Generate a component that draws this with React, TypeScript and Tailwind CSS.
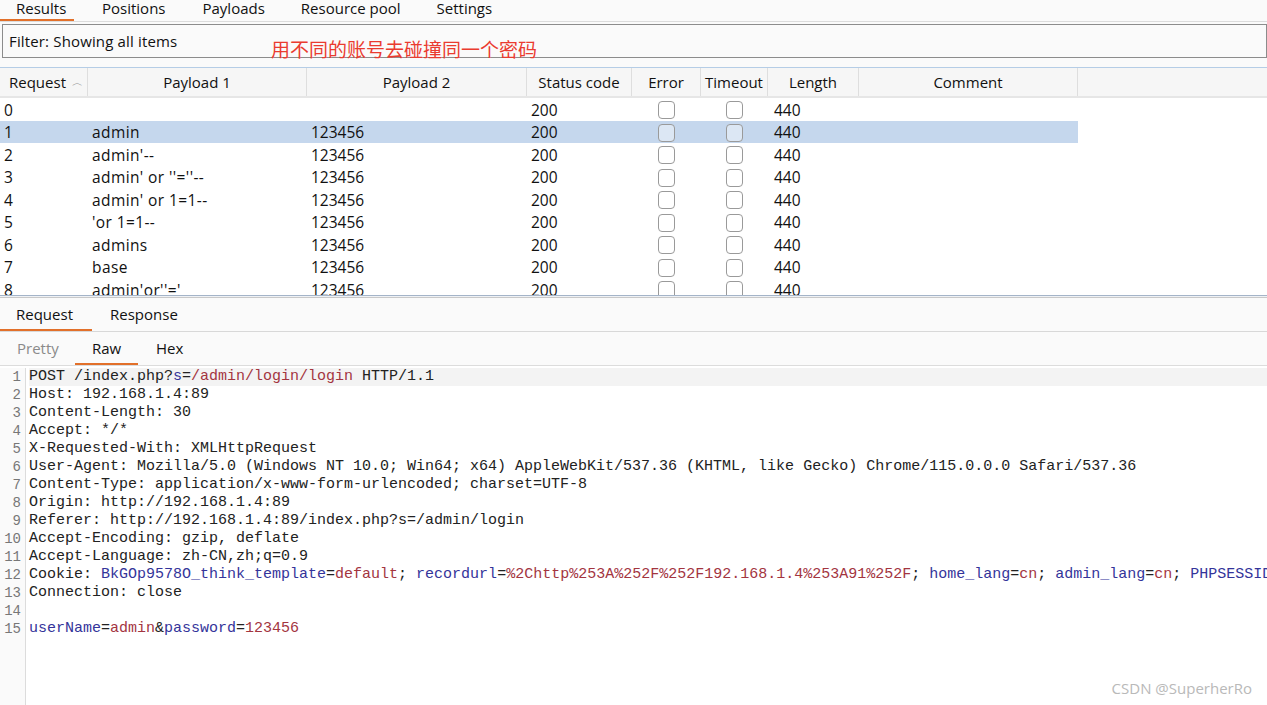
import React from 'react'

const sans = { fontFamily: '"Open Sans", "Noto Sans", sans-serif' }
const cols = [
  { name: 'Request', w: 'w-[88px]', align: 'justify-start pl-[9px]' },
  { name: 'Payload 1', w: 'w-[219px]', align: 'justify-center' },
  { name: 'Payload 2', w: 'w-[220px]', align: 'justify-center' },
  { name: 'Status code', w: 'w-[105px]', align: 'justify-center' },
  { name: 'Error', w: 'w-[69px]', align: 'justify-center' },
  { name: 'Timeout', w: 'w-[67px]', align: 'justify-center' },
  { name: 'Length', w: 'w-[91px]', align: 'justify-center' },
  { name: 'Comment', w: 'w-[219px]', align: 'justify-center' },
]

const rows: [string, string, string][] = [
  ['0', '', ''],
  ['1', 'admin', '123456'],
  ['2', "admin'--", '123456'],
  ['3', "admin' or ''=''--", '123456'],
  ['4', "admin' or 1=1--", '123456'],
  ['5', "'or 1=1--", '123456'],
  ['6', 'admins', '123456'],
  ['7', 'base', '123456'],
  ['8', "admin'or''='", '123456'],
]

type Seg = [string, 'k' | 'b' | 'r']
const B = 'text-[#34349a]'
const R = 'text-[#a3353f]'
const K = 'text-[#222]'

const code: Seg[][] = [
  [['POST /index.php?', 'k'], ['s', 'b'], ['=', 'k'], ['/admin/login/login', 'r'], [' HTTP/1.1', 'k']],
  [['Host: 192.168.1.4:89', 'k']],
  [['Content-Length: 30', 'k']],
  [['Accept: */*', 'k']],
  [['X-Requested-With: XMLHttpRequest', 'k']],
  [['User-Agent: Mozilla/5.0 (Windows NT 10.0; Win64; x64) AppleWebKit/537.36 (KHTML, like Gecko) Chrome/115.0.0.0 Safari/537.36', 'k']],
  [['Content-Type: application/x-www-form-urlencoded; charset=UTF-8', 'k']],
  [['Origin: http://192.168.1.4:89', 'k']],
  [['Referer: http://192.168.1.4:89/index.php?s=/admin/login', 'k']],
  [['Accept-Encoding: gzip, deflate', 'k']],
  [['Accept-Language: zh-CN,zh;q=0.9', 'k']],
  [
    ['Cookie: ', 'k'], ['BkGOp9578O_think_template', 'b'], ['=', 'k'], ['default', 'r'], ['; ', 'k'],
    ['recordurl', 'b'], ['=', 'k'], ['%2Chttp%253A%252F%252F192.168.1.4%253A91%252F', 'r'], ['; ', 'k'],
    ['home_lang', 'b'], ['=', 'k'], ['cn', 'r'], ['; ', 'k'],
    ['admin_lang', 'b'], ['=', 'k'], ['cn', 'r'], ['; ', 'k'], ['PHPSESSID=ab2f0c1e', 'b'],
  ],
  [['Connection: close', 'k']],
  [],
  [['userName', 'b'], ['=', 'k'], ['admin', 'r'], ['&', 'k'], ['password', 'b'], ['=', 'k'], ['123456', 'r']],
]

function Check() {
  return <span className="block w-[17px] h-[18px] rounded-[4px] border border-[#9a9a9a] bg-white/40" />
}

export default function App() {
  return (
    <div className="relative w-full h-[705px] overflow-hidden bg-[#fafafa] flex flex-col text-[#111]" style={sans}>
      {/* top tabs */}
      <div className="h-[22px] flex items-start border-b border-[#dcdcdc] text-[15px] leading-[15px] pt-[1px] shrink-0">
        <div className="w-[74px] h-[20px] border-b-2 border-[#e2702a] pl-[16px]">Results</div>
        <div className="ml-[28px]">Positions</div>
        <div className="ml-[37px]">Payloads</div>
        <div className="ml-[36px]">Resource pool</div>
        <div className="ml-[36px]">Settings</div>
      </div>

      {/* filter */}
      <div className="pl-[2px] pt-[2px] shrink-0">
        <div className="relative h-[34px] border border-[#8c8c8c] bg-[#fafafa] flex items-center pl-[6px] text-[15px] tracking-[0.15px]">
          Filter: Showing all items
          <span
            className="absolute left-[268px] top-[13px] text-[19px] leading-[22px] tracking-normal text-[#ea3b2f]"
            style={{ fontFamily: '"Noto Sans CJK SC", sans-serif' }}
          >
            用不同的账号去碰撞同一个密码
          </span>
        </div>
      </div>

      {/* results table */}
      <div className="mt-[9px] h-[228px] shrink-0 overflow-hidden bg-white border-t border-[#b5cde6]">
        <div className="h-[30px] flex bg-[#f6f6f6] border-b-2 border-[#e6e6e6] text-[15px]">
          {cols.map(c => (
            <div key={c.name} className={`${c.w} h-full flex items-center ${c.align} border-r border-[#dedede] shrink-0`}>
              {c.name}
              {c.name === 'Request' && <span className="ml-[6px] text-[#999] text-[11px]">︿</span>}
            </div>
          ))}
        </div>
        {rows.map(([id, p1, p2]) => (
          <div
            key={id}
            className={`h-[22.5px] w-[1078px] flex items-center pt-[2px] text-[15.5px] ${id === '1' ? 'bg-[#c5d7ed]' : ''}`}
          >
            <div className="w-[88px] pl-[4px] shrink-0">{id}</div>
            <div className="w-[219px] pl-[4px] shrink-0 tracking-[0.4px]">{p1}</div>
            <div className="w-[220px] pl-[4px] shrink-0">{p2}</div>
            <div className="w-[105px] pl-[4px] shrink-0">200</div>
            <div className="w-[69px] flex justify-center shrink-0"><Check /></div>
            <div className="w-[67px] flex justify-center shrink-0"><Check /></div>
            <div className="w-[91px] pl-[6px] shrink-0">440</div>
            <div className="w-[219px] shrink-0" />
          </div>
        ))}
      </div>

      {/* splitter */}
      <div className="h-[3px] shrink-0 border-t border-[#a4b4c8] border-b border-b-[#c9c9c9] bg-[#eef1f5]" />

      {/* request / response tabs */}
      <div className="h-[34px] shrink-0 flex items-end border-b border-[#d8d8d8] text-[15px]">
        <div className="w-[92px] h-[29px] border-b-2 border-[#e2702a] pl-[16px] leading-[25px]">Request</div>
        <div className="h-[29px] pl-[18px] leading-[25px]">Response</div>
      </div>

      {/* pretty / raw / hex */}
      <div className="h-[34px] shrink-0 flex items-end border-b border-[#dcdcdc] text-[15px]">
        <div className="w-[75px] h-[29px] pl-[17px] leading-[25px] text-[#8a8a8a]">Pretty</div>
        <div className="w-[63px] h-[29px] pl-[17px] leading-[25px] border-b-2 border-[#e2702a]">Raw</div>
        <div className="h-[29px] pl-[18px] leading-[25px]">Hex</div>
      </div>

      {/* editor */}
      <div className="flex-1 flex bg-white pt-[2px] overflow-hidden" style={{ fontFamily: '"Liberation Mono", "Courier New", monospace' }}>
        <div className="w-[26px] shrink-0 border-r border-[#dcdcdc] text-right pr-[4px] text-[#777] text-[14px] leading-[18px] bg-[#fafafa]">
          {code.map((_, i) => (
            <div key={i} className="h-[18px]">{i + 1}</div>
          ))}
        </div>
        <div className="flex-1 text-[15px] leading-[18px] whitespace-pre pl-[3px]">
          {code.map((line, i) => (
            <div key={i} className={`h-[18px] ${i === 0 ? 'bg-[#f3f3f3]' : ''}`}>
              {line.map(([t, c], j) => (
                <span key={j} className={c === 'b' ? B : c === 'r' ? R : K}>{t}</span>
              ))}
            </div>
          ))}
        </div>
      </div>

      <div className="absolute right-[15px] top-[677px] text-[15px] text-[#b9b9b9]" style={sans}>CSDN @SuperherRo</div>
    </div>
  )
}
